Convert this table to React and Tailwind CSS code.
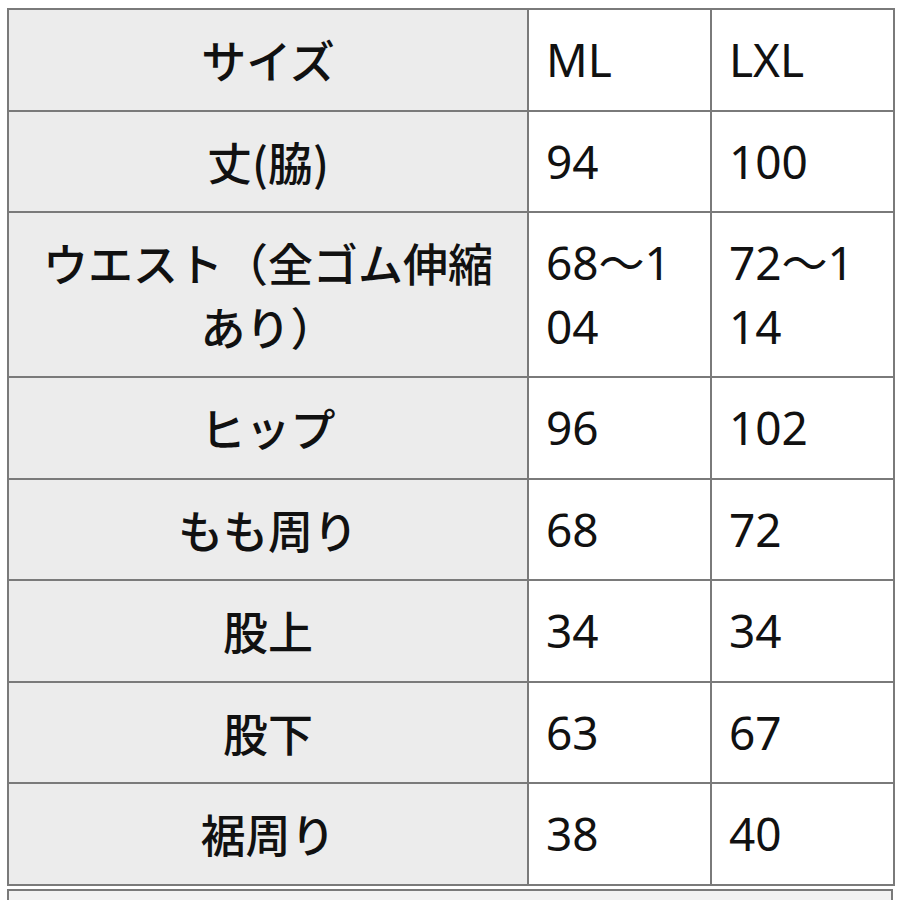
import React from "react";

const rows = [
  { label: "丈(脇)", a: "94", b: "100" },
  { label: "ウエスト（全ゴム伸縮あり）", a: "68～104", b: "72～114" },
  { label: "ヒップ", a: "96", b: "102" },
  { label: "もも周り", a: "68", b: "72" },
  { label: "股上", a: "34", b: "34" },
  { label: "股下", a: "63", b: "67" },
  { label: "裾周り", a: "38", b: "40" },
];

const labelCls =
  "border-2 border-[#7a7a7a] bg-[#ececec] text-center align-middle px-[20px] py-[18px] text-[45px] leading-[63.5px] font-medium text-[#111]";
const valCls =
  "border-2 border-[#7a7a7a] bg-white text-left align-middle pl-[17px] pr-[17px] py-[18px] text-[46px] leading-[63.5px] font-normal text-[#111] break-all";

export default function App() {
  return (
    <div
      className="h-[900px] bg-white pt-[8px] px-[7px] overflow-hidden"
      style={{ fontFamily: '"Noto Sans", "Noto Sans CJK JP", sans-serif' }}
    >
      <table className="w-[886px] table-fixed border-collapse">
        <colgroup>
          <col className="w-[520px]" />
          <col className="w-[183px]" />
          <col className="w-[183px]" />
        </colgroup>
        <tbody>
          <tr>
            <td className={labelCls} style={{ fontFamily: '"Noto Sans CJK JP", sans-serif' }}>サイズ</td>
            <td className={valCls}>ML</td>
            <td className={valCls}>LXL</td>
          </tr>
          {rows.map((r) => (
            <tr key={r.label}>
              <td className={labelCls} style={{ fontFamily: '"Noto Sans CJK JP", sans-serif' }}>{r.label}</td>
              <td className={valCls}>{r.a}</td>
              <td className={valCls}>{r.b}</td>
            </tr>
          ))}
        </tbody>
      </table>
      <div className="mt-[3px] h-[12px] border-2 border-b-0 border-[#7a7a7a] bg-[#f2f2f2]"></div>
    </div>
  );
}
